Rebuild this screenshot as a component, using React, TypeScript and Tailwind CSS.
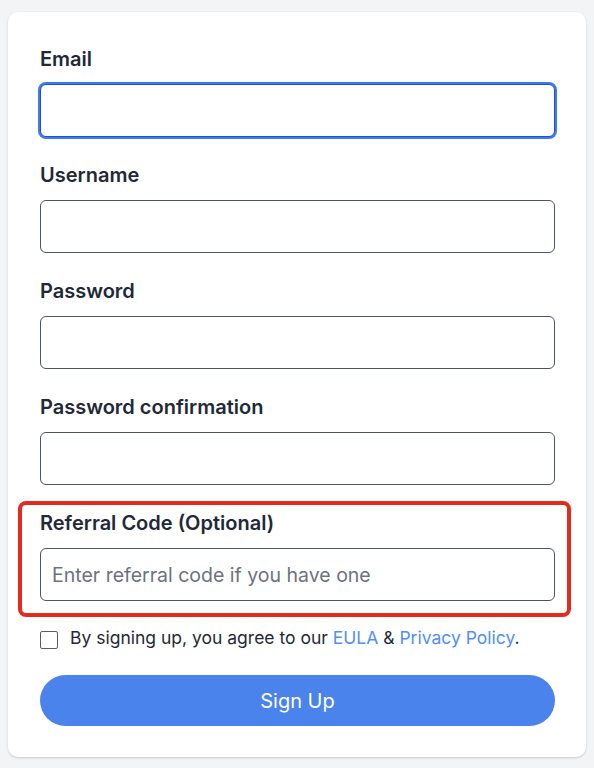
const FONT = "font-['Inter','Noto_Sans',sans-serif]";

function Field({
  label,
  type = "text",
  placeholder,
  focused = false,
}: {
  label: string;
  type?: string;
  placeholder?: string;
  focused?: boolean;
}) {
  return (
    <div>
      <label className="block text-[20px] leading-[28px] font-semibold text-[#1f2937] mb-[11px]">
        {label}
      </label>
      <input
        type={type}
        placeholder={placeholder}
        className={
          focused
            ? "block w-full h-[53px] rounded-md border border-[#1d4ed8] ring-2 ring-[#3b7cf0] px-[11px] text-[19.5px] text-[#1f2937] outline-none bg-white"
            : "block w-full h-[53px] rounded-md border border-[#4b5563] px-[11px] text-[19.5px] text-[#1f2937] placeholder:text-[#6b7280] outline-none bg-white"
        }
      />
    </div>
  );
}

export default function App() {
  return (
    <div className={`min-h-screen bg-[#f3f4f6] pt-[12px] pb-[11px] px-[8px] ${FONT}`}>
      <form className="bg-white rounded-[10px] shadow-[0_1px_3px_rgba(0,0,0,0.12),0_1px_2px_rgba(0,0,0,0.06)] pt-[33px] pb-[31px] pl-[32px] pr-[31px]">
        <Field label="Email" type="email" focused />
        <div className="mt-[24px]">
          <Field label="Username" />
        </div>
        <div className="mt-[24px]">
          <Field label="Password" type="password" />
        </div>
        <div className="mt-[24px]">
          <Field label="Password confirmation" type="password" />
        </div>

        {/* Highlighted referral field */}
        <div className="mt-[16px] -ml-[22px] -mr-[16px] border-4 border-[#e5291c] rounded-lg pt-[4px] pb-[12px] pl-[18px] pr-[12px]">
          <Field
            label="Referral Code (Optional)"
            placeholder="Enter referral code if you have one"
          />
        </div>

        <div className="mt-[8px] flex items-center gap-[12px] h-[26px]">
          <input
            type="checkbox"
            className="appearance-none w-[18px] h-[18px] mt-[3px] border border-[#585f6b] rounded-[2px] bg-white shrink-0"
          />
          <span className="text-[17.5px] leading-[26px] text-[#1f2937]">
            By signing up, you agree to our{" "}
            <a href="#" className="text-[#4f8ff6]">EULA</a> &amp;{" "}
            <a href="#" className="text-[#4f8ff6]">Privacy Policy</a>.
          </span>
        </div>

        <button
          type="button"
          className="mt-[24px] w-full h-[51px] rounded-full bg-[#4b83ec] text-white text-[20px]"
        >
          Sign Up
        </button>
      </form>
    </div>
  );
}
